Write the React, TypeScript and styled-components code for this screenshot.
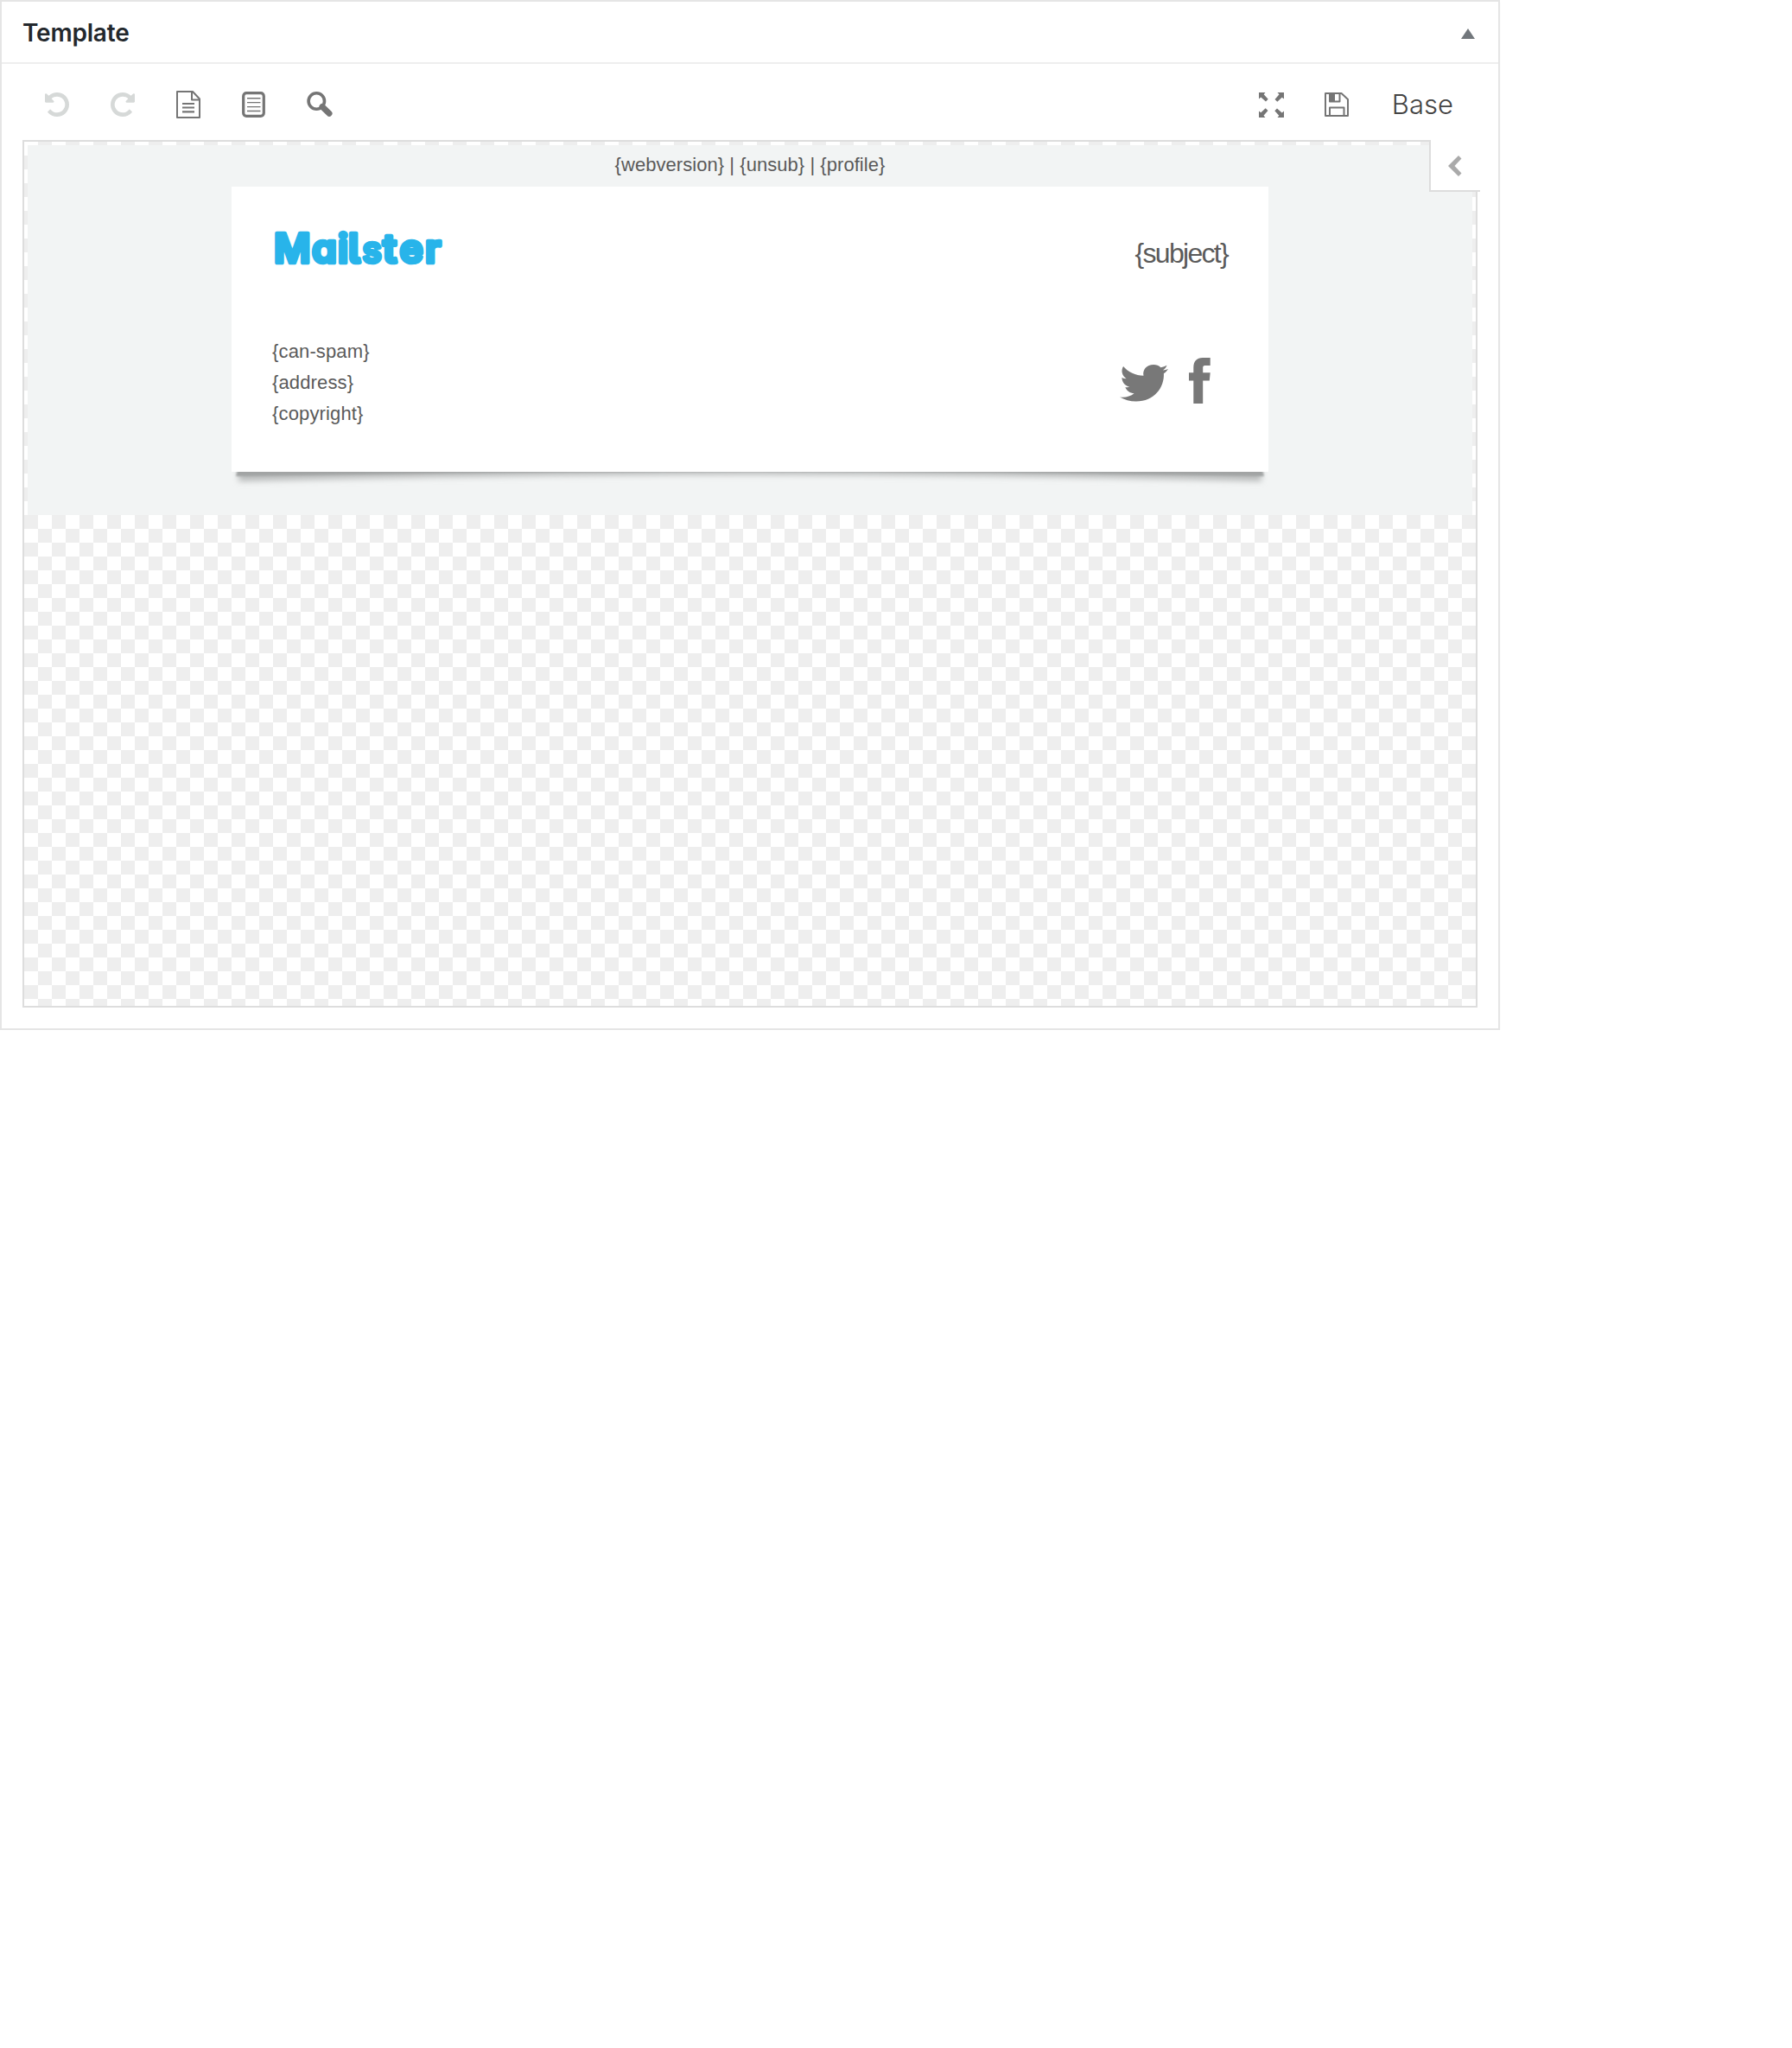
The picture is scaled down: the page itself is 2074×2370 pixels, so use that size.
import React from "react";
import styled, { createGlobalStyle } from "styled-components";

const Global = createGlobalStyle`
  * { box-sizing: border-box; }
  body { margin: 0; background: #fff; }
`;

const sans = `"Liberation Sans", Helvetica, Arial, sans-serif`;
const ui = `Inter, Roboto, sans-serif`;

const Panel = styled.section`
  width: 1736px;
  height: 1192px;
  display: flex;
  flex-direction: column;
  border: 2px solid #e5e5e5;
  background: #fff;
  box-shadow: 0 2px 2px rgba(0, 0, 0, 0.04);
`;

const Header = styled.header`
  flex: 0 0 72px;
  display: flex;
  justify-content: space-between;
  align-items: center;
  padding: 0 27px 0 24px;
  border-bottom: 2px solid #eee;
`;

const Title = styled.h2`
  margin: 2px 0 0;
  font: 600 28px/40px ${ui};
  letter-spacing: -0.2px;
  color: #23282d;
`;

const Caret = styled.i`
  width: 16px;
  margin-top: 4px;
  border: 8px solid transparent;
  border-top: 0;
  border-bottom: 12px solid #72777c;
`;

const Toolbar = styled.div`
  flex: 0 0 88px;
  display: flex;
  justify-content: space-between;
  align-items: center;
  padding: 6px 52px 0 26px;
`;

const Group = styled.div`
  display: flex;
  align-items: center;
`;

const Tool = styled.button<{ $off?: boolean }>`
  width: 76px;
  height: 40px;
  padding: 0;
  border: 0;
  background: none;
  display: flex;
  align-items: center;
  justify-content: center;
  color: ${(p) => (p.$off ? "#d6d9d8" : "#757575")};
`;

const TemplateName = styled.span`
  margin-left: 25px;
  font: 300 31px/40px ${ui};
  color: #444;
`;

const Canvas = styled.div`
  position: relative;
  width: 1684px;
  height: 1004px;
  margin-left: 24px;
  padding: 4px;
  border: 2px solid #ddd;
  background: repeating-conic-gradient(#fff 0 25%, #eee 0 50%) 16px 0 / 32px 32px;
`;

const OptionsToggle = styled.button`
  position: absolute;
  top: -2px;
  right: -5px;
  width: 59px;
  height: 60px;
  display: flex;
  align-items: center;
  padding: 2px 0 0 20px;
  border: solid #ddd;
  border-width: 0 0 2px 2px;
  background: #fff;
  color: #aaa;
`;

const Mail = styled.div`
  width: 1672px;
  height: 428px;
  display: flex;
  flex-direction: column;
  align-items: center;
  background: #f2f4f4;
  font: 22px/36px ${sans};
  color: #5a5a5a;
`;

const Links = styled.div`
  height: 48px;
  padding-top: 5px;
  letter-spacing: 0.05px;
`;

const Card = styled.article`
  width: 1200px;
  height: 330px;
  padding: 36px 44px 0 47px;
  background: #fff;
`;

const CardRow = styled.div<{ $height: number }>`
  display: flex;
  justify-content: space-between;
  align-items: flex-start;
  height: ${(p) => p.$height}px;
`;

const Subject = styled.div`
  padding: 23px 3px 0 0;
  font-size: 32px;
  letter-spacing: -1.7px;
`;

const Address = styled.div`
  padding-top: 6px;
  letter-spacing: 0.14px;
`;

const Social = styled.div`
  display: flex;
  align-items: flex-start;
  gap: 24px;
  padding: 31px 23px 0 0;
  color: #787878;
`;

const Shadow = styled.svg`
  display: block;
`;

const Wordmark = styled.text`
  font-family: Inter, sans-serif;
  font-weight: 600;
  font-size: 46px;
  font-feature-settings: "cv11" 1, "cv05" 1;
  fill: #28b4ea;
  stroke: #28b4ea;
  stroke-width: 4.6px;
  stroke-linejoin: round;
`;

const Narrow = styled.tspan`
  font-size: 41px;
  font-weight: 500;
`;

const UNDO =
  "M1536 896q0 156-61 298t-164 245-245 164-298 61q-172 0-327-72.5t-264-204.5q-7-10-6.5-22.5t8.5-20.5l137-138q10-9 25-9 16 2 23 12 73 95 179 147t225 52q104 0 198.5-40.5t163.5-109.5 109.5-163.5 40.5-198.5-40.5-198.5-109.5-163.5-163.5-109.5-198.5-40.5q-98 0-188 35.5t-160 101.5l137 138q31 30 14 69-17 40-59 40h-448q-26 0-45-19t-19-45v-448q0-42 40-59 39-17 69 14l130 129q107-101 244.5-156.5t284.5-55.5q156 0 298 61t245 164 164 245 61 298z";

const Undo = ({ flip = false }) => (
  <svg width="28" height="28" viewBox="0 128 1536 1536" fill="currentColor">
    <path d={UNDO} transform={flip ? "translate(1536 0) scale(-1 1)" : undefined} />
  </svg>
);

const PageIcon = () => (
  <svg width="28" height="32" viewBox="0 0 28 32" fill="none" stroke="currentColor" strokeWidth="2" strokeLinejoin="round">
    <path d="M1 1H19L27 9.500V31H1Z" />
    <path d="M18 1V10.500H27" />
    <path d="M7 15H21M7 19.500H21M7 24.300H21" strokeWidth="2.200" />
  </svg>
);

const ListIcon = () => (
  <svg width="28" height="30" viewBox="0 0 28 30" fill="none" stroke="currentColor">
    <rect x="1.700" y="1.700" width="23.600" height="26.600" rx="3.500" strokeWidth="3.200" />
    <path d="M6 7.700H21.500M6 12.600H21.500M6 17.600H21.500M6 22.500H21.500" strokeWidth="1.400" />
  </svg>
);

const SearchIcon = () => (
  <svg width="30" height="30" viewBox="0 0 30 30" fill="none" stroke="currentColor">
    <circle cx="11.300" cy="11" r="9.200" strokeWidth="3.600" />
    <path d="M18 17.500L26 25.200" strokeWidth="7" strokeLinecap="round" />
  </svg>
);

const ExpandIcon = () => (
  <svg width="29" height="29" viewBox="0 0 29 29" fill="currentColor">
    {[0, 90, 180, 270].map((a) => (
      <path key={a} transform={`rotate(${a} 14.500 14.500)`} d="M0 0H7.500L5.700 2.300L10.700 7.700L8 10.500L2.300 5.500L0 7.500Z" />
    ))}
  </svg>
);

const SaveIcon = () => (
  <svg width="29" height="28" viewBox="0 0 29 28" fill="none" stroke="currentColor" strokeWidth="2" strokeLinejoin="round">
    <path d="M1 1H19.500L27 8V27H1Z" />
    <path d="M6 1V10.500H17.500V1M6 27V17.500H22.500V27" />
    <path d="M6 1H12V10.500H6Z" fill="currentColor" stroke="none" />
  </svg>
);

const ChevronIcon = () => (
  <svg width="16" height="24" viewBox="0 0 16 24" fill="currentColor">
    <path d="M12 0L15.500 3.500L7.500 12L15.500 20.500L12 24L0 12Z" />
  </svg>
);

const Logo = () => (
  <svg width="204" height="72" viewBox="0 -12 204 72" role="img" aria-label="Mailster">
    <Wordmark x="2 46 76 88 104.500 128 147.500 177" y="40">
      Mail<Narrow>s</Narrow>ter
    </Wordmark>
  </svg>
);

const TwitterIcon = () => (
  <svg width="56" height="53" viewBox="0 0 55 53" preserveAspectRatio="none" fill="currentColor">
    <path d="M0 45.500C6 46.300 12 45 16.300 41.300C11.500 41 7.500 38 6.300 34C8 34.300 9.800 34.200 11.200 33.800C6 32.500 2.500 28.500 2.400 23C4 23.800 5.700 24.300 7.500 24.300C2.500 20.700 1 14.700 4 10C9.500 16.500 18 20.500 27 20.800C25.500 14 30.500 8 38.500 8C41.500 8 44.500 9.200 46.600 11.200C49 10.700 51.500 9.900 53.500 8.800C52.700 11.200 51.200 13.200 49 14.500C51.200 14.200 53.200 13.700 55 12.900C53.600 15 52 16.700 50 18.200C50.800 34 39.500 50.500 18.500 50.500C11.700 50.500 5.200 48.600 0 45.500Z" />
  </svg>
);

const FacebookIcon = () => (
  <svg width="25" height="53" viewBox="0 0 25 53" fill="currentColor">
    <path d="M5.300 53V26.500H0V17.300H5.300V11.500C5.300 4 9 0 16 0H24.700V9H18.500C16.800 9 16.200 10 16.200 11.500V17.300H24.700L23.800 26.500H16.200V53Z" />
  </svg>
);

const CardShadow = () => (
  <Shadow width="1200" height="30" viewBox="0 0 1200 30">
    <defs>
      <filter id="soft" x="-5%" y="-100%" width="110%" height="300%">
        <feGaussianBlur stdDeviation="1.2" />
      </filter>
      <filter id="wide" x="-5%" y="-100%" width="110%" height="300%">
        <feGaussianBlur stdDeviation="3.5" />
      </filter>
    </defs>
    <path d="M8 -6H1192V11Q600 -5 8 11Z" fill="#b8baba" filter="url(#wide)" />
    <path d="M9 -8H1191L1195 5Q900 0 600 0Q300 0 5 5Z" fill="#a2a4a4" filter="url(#soft)" />
  </Shadow>
);

export default function App() {
  return (
    <>
      <Global />
      <Panel>
        <Header>
          <Title>Template</Title>
          <Caret />
        </Header>
        <Toolbar>
          <Group>
            <Tool $off aria-label="Undo"><Undo /></Tool>
            <Tool $off aria-label="Redo"><Undo flip /></Tool>
            <Tool aria-label="Page"><PageIcon /></Tool>
            <Tool aria-label="Text"><ListIcon /></Tool>
            <Tool aria-label="Preview"><SearchIcon /></Tool>
          </Group>
          <Group>
            <Tool aria-label="Full screen"><ExpandIcon /></Tool>
            <Tool aria-label="Save"><SaveIcon /></Tool>
            <TemplateName>Base</TemplateName>
          </Group>
        </Toolbar>
        <Canvas>
          <Mail>
            <Links>{"{webversion} | {unsub} | {profile}"}</Links>
            <Card>
              <CardRow $height={131}>
                <Logo />
                <Subject>{"{subject}"}</Subject>
              </CardRow>
              <CardRow $height={150}>
                <Address>
                  <div>{"{can-spam}"}</div>
                  <div>{"{address}"}</div>
                  <div>{"{copyright}"}</div>
                </Address>
                <Social>
                  <TwitterIcon />
                  <FacebookIcon />
                </Social>
              </CardRow>
            </Card>
            <CardShadow />
          </Mail>
          <OptionsToggle aria-label="Options"><ChevronIcon /></OptionsToggle>
        </Canvas>
      </Panel>
    </>
  );
}
